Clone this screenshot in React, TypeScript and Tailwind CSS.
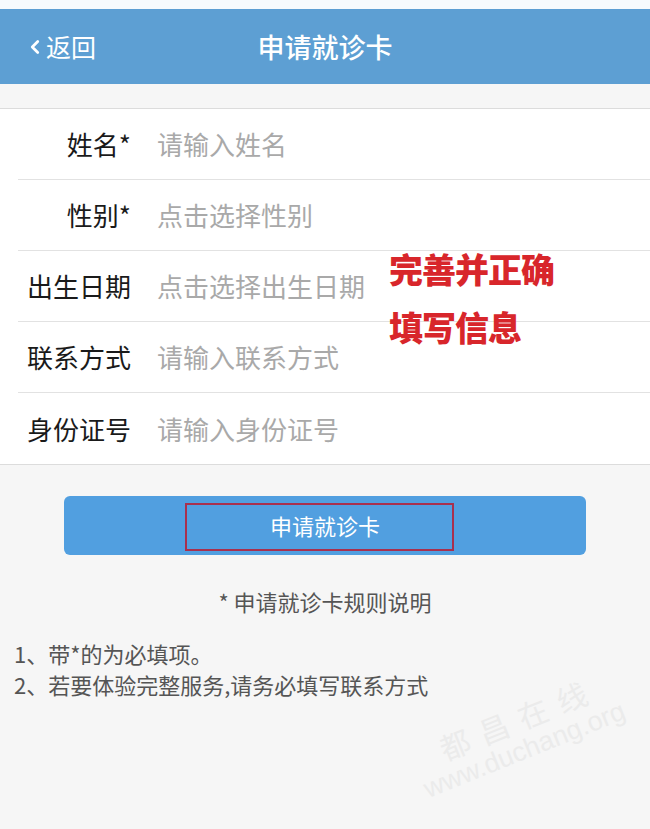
import { ChevronLeft } from "lucide-react";

const rows = [
  { label: "姓名*", placeholder: "请输入姓名" },
  { label: "性别*", placeholder: "点击选择性别" },
  { label: "出生日期", placeholder: "点击选择出生日期" },
  { label: "联系方式", placeholder: "请输入联系方式" },
  { label: "身份证号", placeholder: "请输入身份证号" },
];

export default function App() {
  return (
    <div
      className="relative w-[650px] h-[829px] overflow-hidden bg-[#f6f6f6] text-[#222]"
      style={{ fontFamily: '"Noto Sans CJK SC", "Noto Sans", sans-serif' }}
    >
      <div className="h-[9px] bg-[#f7fbfd]" />
      <header className="relative h-[75px] bg-[#5d9fd3] flex items-center justify-center text-white">
        <div className="absolute left-[24px] top-0 h-full flex items-center">
          <ChevronLeft className="w-[22px] h-[30px]" strokeWidth={3} />
          <span className="text-[25px] leading-none">返回</span>
        </div>
        <h1 className="text-[27px] font-medium leading-none">申请就诊卡</h1>
      </header>
      <div className="h-[25px] bg-[#f6f6f6] border-b border-[#dcdcdc]" />

      <div className="relative bg-white border-b border-[#dcdcdc]">
        {rows.map((r, i) => (
          <div
            key={r.label}
            className={`ml-[18px] h-[71px] flex items-center ${
              i < rows.length - 1 ? "border-b border-[#e2e2e2]" : "h-[70px]"
            }`}
          >
            <div className="w-[113px] text-right text-[26px] leading-none text-[#1a1a1a]">
              {r.label}
            </div>
            <div className="ml-[26px] text-[26px] leading-none text-[#a9a9a9]">
              {r.placeholder}
            </div>
          </div>
        ))}
        <div className="absolute left-[389px] top-[143px] flex flex-col gap-[24px] text-[34px] font-black leading-none text-[#d8262b] tracking-[-1px]">
          <span>完善并正确</span>
          <span>填写信息</span>
        </div>
      </div>

      <div className="px-[64px] pt-[31px]">
        <button
          type="button"
          className="relative w-full h-[59px] rounded-[6px] bg-[#519fe0] text-white text-[22px] flex items-center justify-center"
        >
          申请就诊卡
          <span className="absolute left-[121px] top-[7px] w-[269px] h-[48px] border-2 border-[#a8304e]" />
        </button>
      </div>

      <p className="mt-[35px] text-center text-[22px] leading-none text-[#555]">
        * 申请就诊卡规则说明
      </p>
      <div className="mt-[26px] px-[14px] text-[22px] leading-[31px] text-[#555]">
        <p>1、带*的为必填项。</p>
        <p>2、若要体验完整服务,请务必填写联系方式</p>
      </div>

      <div className="absolute left-[430px] top-[742px] -rotate-[22deg] origin-bottom-left whitespace-nowrap text-[#ebebeb] pointer-events-none select-none">
        <div
          className="text-[30px] tracking-[12px] ml-[30px] leading-none"
          style={{ fontFamily: '"Noto Sans CJK SC", serif' }}
        >
          都昌在线
        </div>
        <div
          className="text-[27px] leading-none mt-[4px]"
          style={{ fontFamily: '"Liberation Sans", sans-serif' }}
        >
          www.duchang.org
        </div>
      </div>
    </div>
  );
}
